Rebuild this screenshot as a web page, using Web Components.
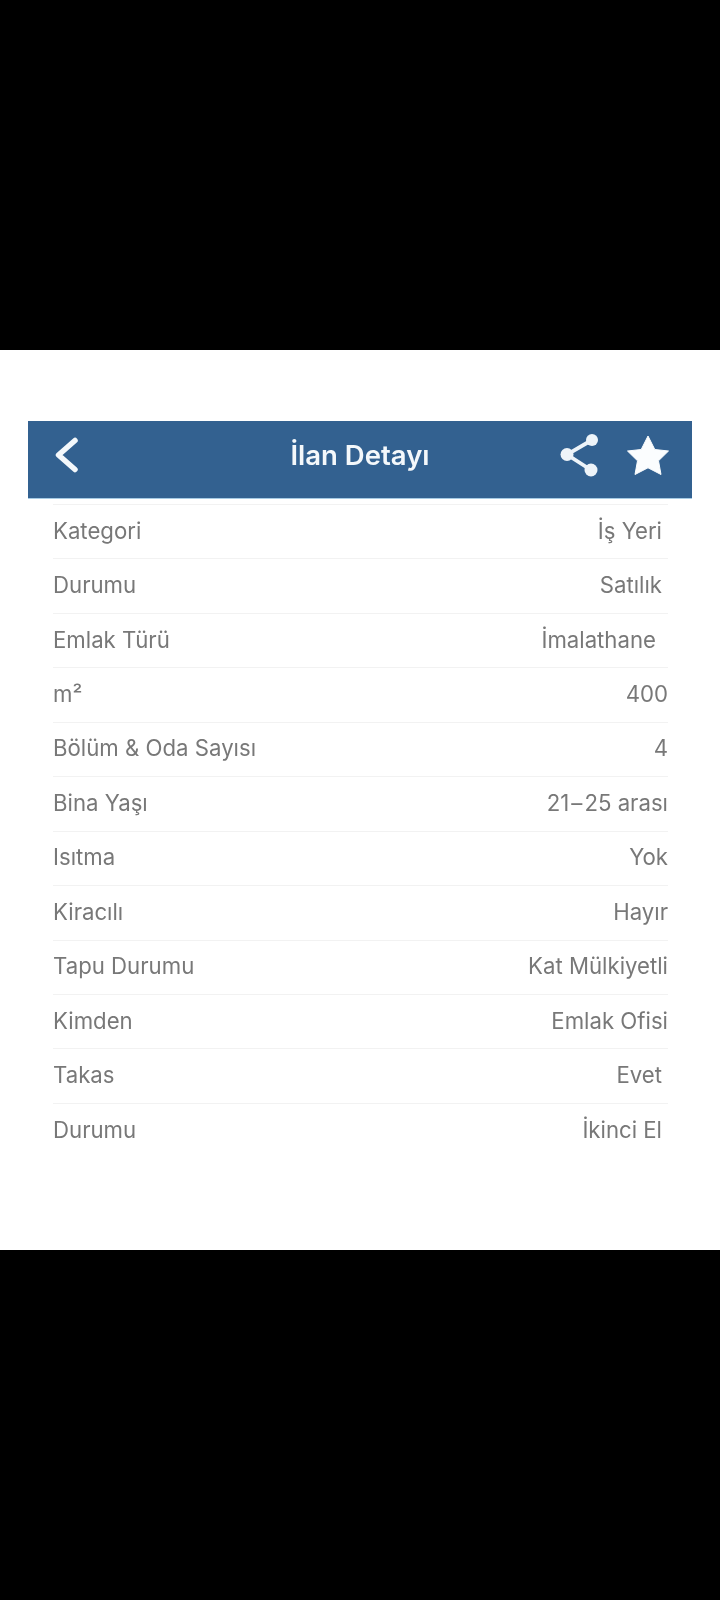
<!DOCTYPE html>
<html lang="tr">
<head>
<meta charset="utf-8">
<title>İlan Detayı</title>
<style>
    html, body { margin: 0; background: #000; }
    body { width: 720px; height: 1600px; overflow: hidden; font-family: Inter, "Noto Sans", sans-serif; }
    .dash { margin: 0 2px; }
</style>
</head>
<body>
<ilan-screen>
    <ilan-header slot="header" title-text="İlan Detayı"></ilan-header>
    <detail-row inset="6"><span slot="label">Kategori</span>İş Yeri</detail-row>
    <detail-row inset="6"><span slot="label">Durumu</span>Satılık</detail-row>
    <detail-row inset="12"><span slot="label">Emlak Türü</span>İmalathane</detail-row>
    <detail-row><span slot="label">m²</span>400</detail-row>
    <detail-row><span slot="label">Bölüm &amp; Oda Sayısı</span>4</detail-row>
    <detail-row><span slot="label">Bina Yaşı</span>21<span class="dash">–</span>25 arası</detail-row>
    <detail-row><span slot="label">Isıtma</span>Yok</detail-row>
    <detail-row><span slot="label">Kiracılı</span>Hayır</detail-row>
    <detail-row><span slot="label">Tapu Durumu</span>Kat Mülkiyetli</detail-row>
    <detail-row><span slot="label">Kimden</span>Emlak Ofisi</detail-row>
    <detail-row inset="6"><span slot="label">Takas</span>Evet</detail-row>
    <detail-row inset="6"><span slot="label">Durumu</span>İkinci El</detail-row>
</ilan-screen>
<script>
class IlanScreen extends HTMLElement {
    constructor() {
        super();
        this.attachShadow({ mode: 'open' });
        this.shadowRoot.innerHTML = `
            <style>
                :host { display: block; margin-top: 350px; height: 900px; background: #fff; padding-top: 71px; box-sizing: border-box; }
                .list { display: flex; flex-direction: column; margin: 5px 52px 0 53px; filter: blur(.45px); }
            </style>
            <slot name="header"></slot>
            <div class="list"><slot></slot></div>
        `;
    }
}

class IlanHeader extends HTMLElement {
    constructor() {
        super();
        this.attachShadow({ mode: 'open' });
    }

    connectedCallback() {
        const title = this.getAttribute('title-text') || '';
        this.shadowRoot.innerHTML = `
            <style>
                :host { display: block; margin: 0 28px; }
                .bar { position: relative; height: 78px; box-sizing: border-box; padding-bottom: 9px; background: #336190; border-bottom: 1px solid #a6cbe4; display: flex; align-items: center; justify-content: center; color: #fff; filter: blur(.45px); }
                h1 { margin: 0; font: 600 27.500px Inter, "Noto Sans", sans-serif; color: #f4f8fb; }
                svg { position: absolute; top: 0; left: 0; }
            </style>
            <div class="bar">
                <h1>${title}</h1>
                <svg width="664" height="77" viewBox="0 0 664 77" fill="none">
                    <path d="M47 19.500 L30.500 34 L47 48.500" stroke="#f4f8fb" stroke-width="5.500" stroke-linecap="round" stroke-linejoin="round"/>
                    <path d="M564 19 L539 33.500 L563 49" stroke="#eef4f9" stroke-width="3.800"/>
                    <circle cx="564" cy="19" r="6" fill="#eef4f9"/>
                    <circle cx="539" cy="33.500" r="6.500" fill="#eef4f9"/>
                    <circle cx="563" cy="49" r="6.500" fill="#eef4f9"/>
                    <path d="M620 15 L626.800 28.500 L640.500 30 L630.500 39.800 L633 53.500 L620 46.800 L607 53.500 L609.500 39.800 L599.500 30 L613.200 28.500 Z" fill="#fbfdfe" stroke="#fbfdfe" stroke-width="1" stroke-linejoin="round"/>
                </svg>
            </div>
        `;
    }
}

class DetailRow extends HTMLElement {
    constructor() {
        super();
        this.attachShadow({ mode: 'open' });
    }

    connectedCallback() {
        const inset = this.getAttribute('inset') || 0;
        this.shadowRoot.innerHTML = `
            <style>
                :host { display: flex; align-items: center; justify-content: space-between; height: 54.450px; padding-bottom: 3px; box-sizing: border-box; border-top: 1px solid #f2f2f2; color: #787878; font: 400 22.200px Inter, "Noto Sans", sans-serif; white-space: nowrap; }
                .value { padding-right: ${inset}px; }
            </style>
            <div class="label"><slot name="label"></slot></div>
            <div class="value"><slot></slot></div>
        `;
    }
}

if (!customElements.get('ilan-screen')) {
    customElements.define('ilan-screen', IlanScreen);
    customElements.define('ilan-header', IlanHeader);
    customElements.define('detail-row', DetailRow);
}
</script>
</body>
</html>
